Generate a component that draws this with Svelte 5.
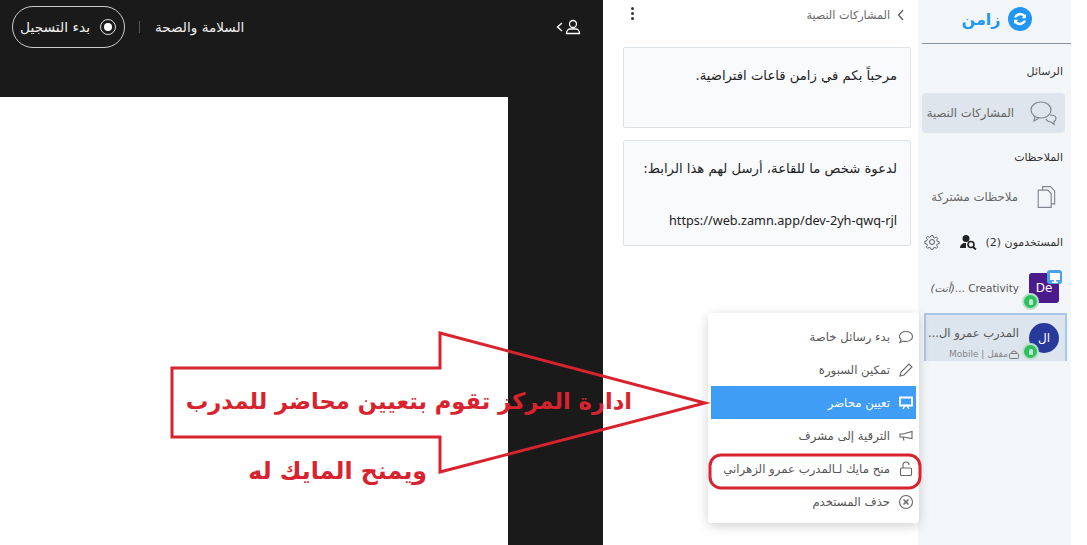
<script lang="ts">
    const menu = [
        { id: "chat", label: "بدء رسائل خاصة" },
        { id: "pen", label: "تمكين السبورة" },
        { id: "screen", label: "تعيين محاضر", active: true },
        { id: "horn", label: "الترقية إلى مشرف" },
        { id: "lock", label: "منح مايك لـالمدرب عمرو الزهراني" },
        { id: "close", label: "حذف المستخدم" },
    ];
</script>

<div class="page" dir="rtl">
    <aside class="sidebar">
        <header class="logo">
            <svg width="24" height="24" viewBox="0 0 24 24">
                <circle cx="12" cy="12" r="12" fill="#2196f3" />
                <path d="M6 10.500a6.500 6.500 0 0 1 11-2.500l1-1v4.200h-4.200l1.400-1.400a4 4 0 0 0-6.600.7zM18 13.500a6.500 6.500 0 0 1-11 2.500l-1 1v-4.200h4.200l-1.400 1.400a4 4 0 0 0 6.600-.7z" fill="#fff" />
            </svg>
            <span>زامن</span>
        </header>

        <h4 class="first">الرسائل</h4>
        <div class="nav active">
            <svg width="30" height="28" viewBox="0 0 30 28" fill="none" stroke="#7f8792" stroke-width="1.200">
                <ellipse cx="12" cy="11" rx="10" ry="8" />
                <path d="M6 17l-1 5 5-3" />
                <path d="M21 16c4 0 6 1.500 6 3.500 0 1.500-1 2.500-2 3v3l-3-2.500c-2 0-4-1-5-3" />
            </svg>
            <span>المشاركات النصية</span>
        </div>

        <h4>الملاحظات</h4>
        <div class="nav">
            <svg width="26" height="26" viewBox="0 0 30 28" fill="none" stroke="#7f8792" stroke-width="1.300">
                <path d="M6 6h11l4 4v16H6z" />
                <path d="M11 6V2h9l5 5v15h-4" />
            </svg>
            <span>ملاحظات مشتركة</span>
        </div>

        <div class="users-head">
            <h4>المستخدمون (2)</h4>
            <svg class="find" width="18" height="16" viewBox="0 0 18 16">
                <circle cx="7" cy="4.500" r="3.500" fill="#222" />
                <path d="M1 14c0-3 2-5 6-5v5z" fill="#222" />
                <circle cx="12" cy="10.500" r="3" fill="none" stroke="#222" stroke-width="1.600" />
                <path d="M14 13l3 2.500" stroke="#222" stroke-width="1.800" />
            </svg>
            <svg class="gear" width="16" height="16" viewBox="0 0 16 16" fill="none" stroke="#555" stroke-width="1">
                <circle cx="8" cy="8" r="2.500" />
                <path d="M7 1h2l.4 2 1.600.7 1.700-1.100 1.400 1.400-1.100 1.700.7 1.600 2 .4v2l-2 .4-.7 1.600 1.100 1.700-1.400 1.400-1.700-1.100-1.600.7-.4 2H7l-.4-2-1.600-.7-1.700 1.100-1.400-1.400 1.100-1.700-.7-1.600-2-.4V7l2-.4.7-1.600-1.100-1.700 1.400-1.400 1.700 1.100 1.600-.7z" transform="translate(.6 .6) scale(.93)" />
            </svg>
        </div>

        <div class="user">
            <div class="avatar square">
                De
                <span class="screen-badge">
                    <svg width="12" height="11" viewBox="0 0 12 11" fill="#fff"><path d="M1 1h10v7H1zM5 8h2v1.500h2V11H3V9.500h2z" /></svg>
                </span>
                <span class="online"><i></i></span>
            </div>
            <div class="user-name">Creativity ...<i>(أنت)</i></div>
        </div>

        <div class="user selected">
            <div class="avatar round">
                ال
                <span class="online"><i></i></span>
            </div>
            <div class="user-text">
                <div class="user-name big">المدرب عمرو ال...</div>
                <div class="user-sub">
                    <svg width="10" height="9" viewBox="0 0 10 9" fill="none" stroke="#777"><rect x=".5" y="3.500" width="9" height="5" rx="1" /><path d="M2.500 3.500a2.500 2.500 0 0 1 5 0" /></svg>
                    مقفل | Mobile
                </div>
            </div>
        </div>
    </aside>

    <section class="panel">
        <header class="panel-head">
            <svg width="8" height="12" viewBox="0 0 8 12" fill="none" stroke="#555" stroke-width="1.200"><path d="M6 1L1.500 6 6 11" /></svg>
            <span>المشاركات النصية</span>
            <div class="dots"><i></i><i></i><i></i></div>
        </header>
        <div class="card first-card">
            <p>مرحباً بكم في زامن قاعات افتراضية.</p>
        </div>
        <div class="card">
            <p>لدعوة شخص ما للقاعة، أرسل لهم هذا الرابط:</p>
            <p class="link">https://web.zamn.app/dev-2yh-qwq-rjl</p>
        </div>
    </section>

    <main class="stage-wrap">
        <header class="topbar">
            <svg width="16" height="16" viewBox="0 0 16 16" fill="none" stroke="#fff" stroke-width="1.300">
                <circle cx="8" cy="5" r="3.500" />
                <path d="M1.500 14.500c0-3 2-4.500 3.500-4.500h6c1.500 0 3.500 1.500 3.500 4.500z" />
            </svg>
            <svg class="chev" width="7" height="10" viewBox="0 0 7 10" fill="none" stroke="#fff" stroke-width="1.400"><path d="M6 1L1.500 5 6 9" /></svg>
            <div class="spacer"></div>
            <span class="title">السلامة والصحة</span>
            <span class="sep"></span>
            <button class="record">
                <span class="dot"></span>
                <span>بدء التسجيل</span>
            </button>
        </header>
        <div class="stage"></div>
    </main>

    <ul class="menu">
        {#each menu as item}
            <li class:on={item.active}>
                <svg width="16" height="16" viewBox="0 0 16 16" fill="none" stroke={item.active ? "#fff" : "#666"} stroke-width="1.100">
                    {#if item.id === "chat"}
                        <path d="M8 2.500c3.500 0 6.500 2 6.500 5s-3 5-6.500 5c-1 0-2-.2-2.500-.5L2 13.500l1-3c-1-1-1.500-2-1.500-3 0-3 3-5 6.500-5z" />
                    {:else if item.id === "pen"}
                        <path d="M2 14l1-4 8-8 3 3-8 8z" />
                    {:else if item.id === "screen"}
                        <path d="M2 2.500h12v8H2z" stroke-width="1.800" />
                        <path d="M5 14l2-3.500h2l2 3.500" stroke-width="1.400" />
                    {:else if item.id === "horn"}
                        <path d="M14 3.500v7L5 9H2V6h3zM5 9l1 3.500" />
                    {:else if item.id === "lock"}
                        <rect x="2.500" y="7" width="11" height="7.500" rx="1" />
                        <path d="M5 7V4a3 3 0 0 1 6 0" />
                    {:else}
                        <circle cx="8" cy="8" r="6.500" />
                        <path d="M5.500 5.500l5 5M10.500 5.500l-5 5" stroke-width="1.500" />
                    {/if}
                </svg>
                <span>{item.label}</span>
            </li>
        {/each}
    </ul>

    <svg class="arrow" width="1087" height="545" viewBox="0 0 1087 545">
        <path d="M172 368H440V333L705 403 440 472V437H172z" fill="none" stroke="#d8232e" stroke-width="3" />
        <rect x="710" y="455" width="210" height="33" rx="11" fill="none" stroke="#d8232e" stroke-width="3" />
    </svg>
    <div class="callout one">ادارة المركز تقوم بتعيين محاضر للمدرب</div>
    <div class="callout two">ويمنح المايك له</div>
</div>

<style>
    :global(body) {
        background: #fff;
    }

    .page {
        position: relative;
        display: flex;
        width: 1071px;
        height: 545px;
        overflow: hidden;
        font-family: "DejaVu Sans", sans-serif;
        color: #444;
    }

    .sidebar {
        box-sizing: border-box;
        width: 153px;
        flex: none;
        padding-right: 4px;
        background: #f3f6f9;
        display: flex;
        flex-direction: column;
    }

    .logo {
        height: 38px;
        padding-bottom: 5px;
        margin-right: -4px;
        margin-left: 4px;
        border-bottom: 1px solid #8a949f;
        display: flex;
        align-items: center;
        justify-content: center;
        gap: 7px;
        color: #2196f3;
        font-size: 16px;
        font-weight: 700;
    }

    h4 {
        margin: 0;
        padding: 0 4px;
        font-size: 11px;
        font-weight: 400;
        line-height: 16px;
        color: #333;
    }

    h4.first {
        margin-top: 20px;
        margin-bottom: 13px;
    }

    h4:not(.first) {
        margin-top: 17px;
        margin-bottom: 11px;
    }

    .nav {
        display: flex;
        align-items: center;
        gap: 15px;
        height: 40px;
        margin: 0 2px 0 4px;
        padding-right: 6px;
        font-size: 11.700px;
        color: #666;
        border-radius: 4px;
    }

    .nav.active {
        background: #dfe5ec;
    }

    .users-head {
        display: flex;
        align-items: center;
        gap: 4px;
        margin-top: 16px;
        height: 20px;
    }

    .users-head h4 {
        margin: 0;
        padding: 0 4px;
        color: #333;
    }

    .find {
        margin-top: -2px;
    }

    .gear {
        margin-right: auto;
        margin-left: 6px;
        margin-top: -2px;
    }

    .user {
        display: flex;
        align-items: center;
        gap: 10px;
        height: 48px;
        margin-top: 11px;
        padding-right: 8px;
        font-size: 10.500px;
        color: #555;
        white-space: nowrap;
    }

    .user.selected {
        box-sizing: border-box;
        margin: 1px 0 0 6px;
        padding-right: 6px;
        background: #dce4ee;
        border-top: 2px solid #a9c7e6;
        border-left: 2px solid #a9c7e6;
        border-right: 2px solid #a9c7e6;
    }

    .user-text {
        padding-top: 9px;
    }

    .user-name.big {
        font-size: 11.500px;
    }

    .avatar {
        position: relative;
        flex: none;
        width: 30px;
        height: 30px;
        display: flex;
        align-items: center;
        justify-content: center;
        color: #fff;
        font-size: 12px;
        font-weight: 400;
    }

    .avatar.square {
        background: #4b1a8c;
        border-radius: 3px;
    }

    .avatar.round {
        background: #27399b;
        border-radius: 50%;
    }

    .online {
        position: absolute;
        left: -7px;
        bottom: -7px;
        width: 13px;
        height: 13px;
        background: #2fbf63;
        border: 2px solid #b9dfc6;
        border-radius: 50%;
        display: flex;
        align-items: center;
        justify-content: center;
    }

    .online i {
        display: block;
        width: 4px;
        height: 6px;
        background: #bfeccd;
        border-radius: 2px 2px 1px 1px;
    }

    .screen-badge {
        position: absolute;
        top: -3px;
        right: -3px;
        width: 15px;
        height: 14px;
        background: #4aa3e8;
        border-radius: 3px;
        display: flex;
        align-items: center;
        justify-content: center;
    }

    .user-sub {
        display: flex;
        align-items: center;
        gap: 1px;
        font-size: 9px;
        color: #888;
        margin-top: 9px;
    }

    .panel {
        box-sizing: border-box;
        width: 315px;
        flex: none;
        background: #fff;
        padding: 0 7px 0 20px;
    }

    .panel-head {
        display: flex;
        align-items: center;
        gap: 7px;
        height: 47px;
        padding-right: 6px;
        padding-bottom: 17px;
        box-sizing: border-box;
        font-size: 11.200px;
        color: #666;
    }

    .dots {
        margin-right: auto;
        margin-left: 8px;
        display: flex;
        flex-direction: column;
        gap: 2px;
        align-self: flex-start;
        margin-top: 7px;
    }

    .dots i {
        display: block;
        width: 3px;
        height: 3px;
        border-radius: 50%;
        background: #333;
    }

    .card {
        box-sizing: border-box;
        height: 106px;
        margin-bottom: 12px;
        padding: 18px 13px 0;
        background: #f8fafc;
        border: 1px solid #dde2e7;
        border-radius: 2px;
        font-size: 13.200px;
        color: #222;
    }

    .first-card {
        height: 81px;
    }

    .card p {
        margin: 0;
        line-height: 20px;
    }

    .card .link {
        margin-top: 31px;
        direction: ltr;
        text-align: right;
        font-family: "Noto Sans", sans-serif;
        font-size: 12.700px;
    }

    .stage-wrap {
        flex: 1;
        background: #1a1a1a;
        display: flex;
        flex-direction: column;
    }

    .topbar {
        height: 97px;
        flex: none;
        box-sizing: border-box;
        padding: 6px 22px 0 12px;
        display: flex;
        align-items: flex-start;
        color: #eee;
    }

    .topbar > svg {
        margin-top: 13px;
    }

    .topbar > .chev {
        margin-top: 16px;
        margin-right: 2px;
    }

    .spacer {
        flex: 1;
    }

    .title {
        line-height: 42px;
        font-size: 13.600px;
    }

    .sep {
        width: 1px;
        height: 12px;
        margin: 15px 15px 0 14px;
        background: #555;
    }

    .record {
        flex: none;
        width: 113px;
        height: 42px;
        box-sizing: border-box;
        padding: 0 7px 0 0;
        display: flex;
        align-items: center;
        gap: 9px;
        border: 1px solid #ccc;
        border-radius: 21px;
        background: none;
        color: #eee;
        font: inherit;
        font-size: 13.800px;
        white-space: nowrap;
    }

    .dot {
        flex: none;
        width: 8px;
        height: 8px;
        background: #fff;
        border-radius: 50%;
        border: 3px solid #1a1a1a;
        outline: 1.500px solid #ddd;
        margin: 0 2px;
    }

    .stage {
        flex: 1;
        width: 508px;
        margin-right: auto;
        background: #fff;
    }

    .menu {
        position: absolute;
        left: 708px;
        top: 313px;
        width: 211px;
        height: 210px;
        box-sizing: border-box;
        margin: 0;
        padding: 7px 3px;
        list-style: none;
        background: #fff;
        box-shadow: 0 3px 12px rgba(0, 0, 0, 0.18);
        border-radius: 3px;
    }

    .menu li {
        display: flex;
        align-items: center;
        gap: 8px;
        height: 33px;
        padding-right: 2px;
        font-size: 11.700px;
        color: #555;
        white-space: nowrap;
    }

    .menu li.on {
        background: #3f9df5;
        color: #fff;
    }

    .arrow {
        position: absolute;
        left: 0;
        top: 0;
        pointer-events: none;
    }

    .callout {
        position: absolute;
        color: #d8232e;
        font-weight: 700;
        white-space: nowrap;
    }

    .callout.one {
        right: 439px;
        top: 388px;
        font-size: 22.600px;
    }

    .callout.two {
        right: 644px;
        top: 457px;
        font-size: 23.700px;
    }
</style>
